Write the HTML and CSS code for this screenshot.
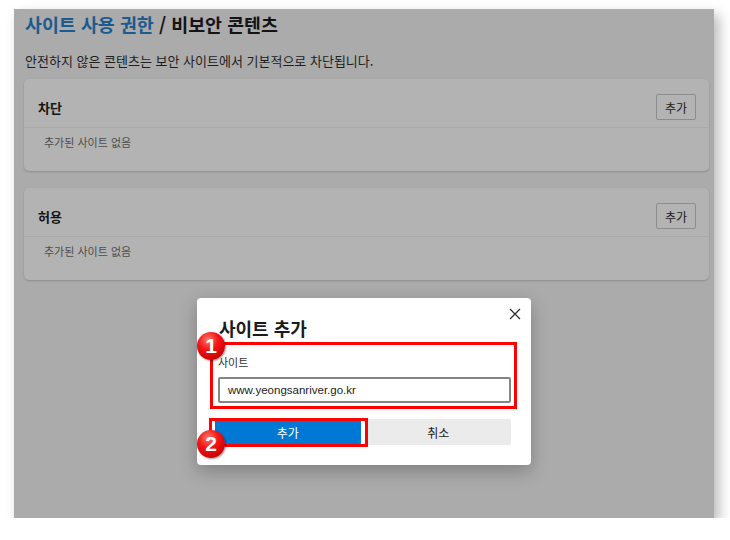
FILE: index.html
```html
<!DOCTYPE html>
<html lang="ko">
<head>
<meta charset="utf-8">
<title>사이트 사용 권한 / 비보안 콘텐츠</title>
<link rel="stylesheet" href="styles.css">
</head>
<body>
<div class="panel">
  <h1 class="title"><span class="crumb">사이트 사용 권한</span> / 비보안 콘텐츠</h1>
  <p class="desc">안전하지 않은 콘텐츠는 보안 사이트에서 기본적으로 차단됩니다.</p>
  <section class="card">
    <div class="card-head"><span class="card-title">차단</span><button class="btn-add">추가</button></div>
    <div class="card-body">추가된 사이트 없음</div>
  </section>
  <section class="card">
    <div class="card-head"><span class="card-title">허용</span><button class="btn-add">추가</button></div>
    <div class="card-body">추가된 사이트 없음</div>
  </section>

  <div class="dialog">
    <button class="close" aria-label="닫기"><svg width="12" height="12" viewBox="0 0 12 12"><path d="M1 1L11 11M11 1L1 11" stroke="#2b2b2b" stroke-width="1.2" fill="none"/></svg></button>
    <h2 class="dlg-title">사이트 추가</h2>
    <div class="field-label">사이트</div>
    <div class="input">www.yeongsanriver.go.kr</div>
    <div class="actions">
      <button class="primary">추가</button>
      <button class="secondary">취소</button>
    </div>
    <div class="mark mark-1"></div>
    <div class="mark mark-2"></div>
    <span class="badge badge-1">1</span>
    <span class="badge badge-2">2</span>
  </div>
</div>
</body>
</html>
```
FILE: styles.css
```css
body {
  margin: 0;
  background: #ffffff;
  font-family: "Noto Sans CJK KR", "Noto Sans", sans-serif;
}

.panel {
  position: relative;
  box-sizing: border-box;
  width: 700px;
  height: 509px;
  margin: 9px 0 0 14px;
  padding: 3px 5px 0 10px;
  background: #ababab;
  box-shadow: 5px 6px 12px rgba(0, 0, 0, 0.28);
}

.title {
  margin: 0 0 0 1px;
  font-size: 18.4px;
  line-height: 24px;
  font-weight: 700;
  color: #141414;
}

.crumb {
  color: #1d5a8e;
}

.desc {
  margin: 16px 0 0 1px;
  font-size: 13px;
  line-height: 18px;
  color: #1e1e1e;
}

.card {
  margin-top: 9px;
  background: #b3b3b3;
  border-radius: 5px;
  box-shadow: 0 1px 2px rgba(0, 0, 0, 0.18);
}

.card + .card {
  margin-top: 17px;
}

.card-head {
  display: flex;
  justify-content: space-between;
  align-items: center;
  padding: 15px 13px 7px 14px;
  border-bottom: 1px solid #a9a9a9;
}

.card-title {
  font-size: 13px;
  font-weight: 700;
  color: #151515;
}

.btn-add {
  width: 40px;
  height: 26px;
  padding: 0;
  border: 1px solid #8c8c8c;
  border-radius: 2px;
  background: #b3b3b3;
  font: 12px "Noto Sans CJK KR", sans-serif;
  color: #1b1b1b;
}

.card-body {
  padding: 6px 20px 21px;
  font-size: 11px;
  line-height: 16px;
  color: #4d4d4d;
}

.dialog {
  position: absolute;
  left: 183px;
  top: 289px;
  box-sizing: border-box;
  width: 334px;
  height: 167px;
  padding: 18px 20px 20px 21px;
  background: #ffffff;
  border-radius: 4px;
  box-shadow: 0 6px 18px rgba(0, 0, 0, 0.25);
}

.close {
  position: absolute;
  top: 10px;
  right: 10px;
  width: 12px;
  height: 12px;
  padding: 0;
  border: 0;
  background: none;
  display: block;
}

.close svg {
  display: block;
}

.dlg-title {
  margin: 0 0 0 1px;
  font-size: 18px;
  line-height: 24px;
  font-weight: 700;
  color: #1b1b1b;
}

.field-label {
  margin-top: 15px;
  font-size: 11px;
  line-height: 14px;
  color: #333333;
}

.input {
  box-sizing: border-box;
  margin-top: 8px;
  height: 26px;
  padding: 0 8px;
  border: 2px solid #858585;
  border-radius: 2px;
  font: 11.5px/22px "Liberation Sans", Arial, sans-serif;
  color: #222222;
}

.actions {
  display: flex;
  gap: 5px;
  width: 296px;
  margin: 16px 0 0 -3px;
}

.actions button {
  flex: 1;
  height: 26px;
  padding: 0;
  border: 0;
  border-radius: 2px;
  font: 12px "Noto Sans CJK KR", sans-serif;
}

.primary {
  background: #0078d4;
  color: #ffffff;
}

.secondary {
  background: #ebebeb;
  color: #1b1b1b;
}

.mark {
  position: absolute;
  box-sizing: border-box;
  border: 3px solid #ff0000;
}

.mark-1 {
  left: 13px;
  top: 44px;
  width: 307px;
  height: 67px;
}

.mark-2 {
  left: 12px;
  top: 120px;
  width: 159px;
  height: 29px;
}

.badge {
  position: absolute;
  left: 0;
  width: 28px;
  height: 28px;
  border-radius: 50%;
  background: radial-gradient(circle at 40% 28%, #ff7a6a 0%, #f21616 38%, #c80000 80%, #8c0000 100%);
  box-shadow: 1px 1px 2px rgba(0, 0, 0, 0.4);
  color: #ffffff;
  font: 700 21px/28px "Liberation Sans", sans-serif;
  text-align: center;
}

.badge-1 {
  top: 34px;
}

.badge-2 {
  top: 132px;
}
```
